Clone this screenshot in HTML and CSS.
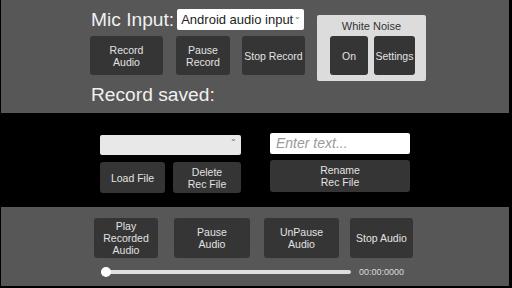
FILE: index.html
```html
<html>
    <head>
        <title>
            Audio Recorder
        </title>
        <link rel="stylesheet" href="styles.css">
    </head>
    <body>
        <div class="panel top">
            <div class="rec-col">
                <div class="mic-row">
                    <span class="big-label">Mic Input:</span>
                    <div class="mic-select">Android audio input <span class="chev">&#8964;</span></div>
                </div>
                <div class="btn-row">
                    <div class="btn w-record">Record<br>Audio</div>
                    <div class="btn w-pause">Pause<br>Record</div>
                    <div class="btn w-stop">Stop Record</div>
                </div>
                <div class="big-label saved">Record saved:</div>
            </div>
            <div class="noise-box">
                <div class="noise-title">White Noise</div>
                <div class="noise-btns">
                    <div class="btn w-on">On</div>
                    <div class="btn w-settings">Settings</div>
                </div>
            </div>
        </div>
        <div class="files">
            <div class="file-col">
                <div class="file-select"><span class="chev small">&#8964;</span></div>
                <div class="file-btns">
                    <div class="btn w-load">Load File</div>
                    <div class="btn w-delete">Delete<br>Rec File</div>
                </div>
            </div>
            <div class="rename-col">
                <div class="text-input">Enter text...</div>
                <div class="btn w-rename">Rename<br>Rec File</div>
            </div>
        </div>
        <div class="panel bottom">
            <div class="play-row">
                <div class="btn w-play">Play<br>Recorded<br>Audio</div>
                <div class="btn w-paudio">Pause<br>Audio</div>
                <div class="btn w-unpause">UnPause<br>Audio</div>
                <div class="btn w-saudio">Stop Audio</div>
            </div>
            <div class="slider-row">
                <div class="track"><div class="knob"></div></div>
                <span class="time">00:00:0000</span>
            </div>
        </div>
    </body>
</html>
```

FILE: styles.css
```css
body {
    margin: 0;
    background-color: #000;
    font-family: "Liberation Sans", Arial, sans-serif;
    width: 512px;
    height: 288px;
    overflow: hidden;
}
.panel {
    background-color: #575757;
    margin-left: 1px;
    width: 508px;
    box-sizing: border-box;
}
.top {
    height: 113px;
    display: flex;
    padding-left: 89px;
    padding-top: 9px;
}
.rec-col {
    width: 215px;
}
.mic-row {
    display: flex;
    align-items: center;
    height: 21px;
}
.big-label {
    color: #f0f0f0;
    font-size: 19.2px;
    margin-left: 1px;
    white-space: nowrap;
}
.mic-select {
    margin-left: 3px;
    width: 127px;
    height: 21px;
    box-sizing: border-box;
    background-color: #fff;
    border-radius: 2px;
    color: #222;
    font-size: 13px;
    line-height: 21px;
    padding-left: 4px;
    position: relative;
    flex-shrink: 0;
}
.chev {
    position: absolute;
    right: 3px;
    top: -3px;
    font-size: 8px;
    color: #666;
}
.chev.small {
    right: 4px;
    top: -1px;
}
.btn-row {
    display: flex;
    margin-top: 6px;
}
.btn {
    background-color: #353535;
    border-radius: 3px;
    color: #e2e2e2;
    font-size: 10.5px;
    line-height: 12px;
    text-align: center;
    display: flex;
    align-items: center;
    justify-content: center;
    height: 39px;
}
.w-record { width: 73px; }
.w-pause { width: 54px; margin-left: 13px; }
.w-stop { width: 63px; margin-left: 12px; }
.saved {
    margin-top: 9px;
}
.noise-box {
    margin-left: 12px;
    margin-top: 6px;
    width: 109px;
    height: 66px;
    background-color: #dcdcdc;
    border-radius: 2px;
    box-sizing: border-box;
    padding-left: 13px;
}
.noise-title {
    color: #333;
    font-size: 11px;
    text-align: center;
    margin-left: -13px;
    margin-top: 5px;
    height: 16px;
}
.noise-btns {
    display: flex;
}
.w-on { width: 38px; }
.w-settings { width: 41px; margin-left: 6px; }
.files {
    height: 94px;
    display: flex;
    padding-left: 100px;
}
.file-col {
    margin-top: 22px;
}
.file-select {
    width: 141px;
    height: 20px;
    background-color: #e8e8e8;
    border-radius: 2px;
    position: relative;
}
.file-btns {
    display: flex;
    margin-top: 7px;
}
.file-btns .btn {
    height: 31px;
}
.w-load { width: 65px; }
.w-delete { width: 68px; margin-left: 8px; }
.rename-col {
    margin-left: 29px;
    margin-top: 20px;
}
.text-input {
    width: 140px;
    height: 21px;
    box-sizing: border-box;
    background-color: #fff;
    border-radius: 2px;
    color: #9a9a9a;
    font-style: italic;
    font-size: 14px;
    line-height: 21px;
    padding-left: 6px;
}
.w-rename {
    width: 140px;
    height: 32px !important;
    margin-top: 6px;
}
.bottom {
    height: 79px;
    padding-top: 11px;
}
.play-row {
    display: flex;
    padding-left: 93px;
}
.play-row .btn {
    height: 40px;
}
.w-play { width: 64px; }
.w-paudio { width: 76px; margin-left: 16px; }
.w-unpause { width: 75px; margin-left: 14px; }
.w-saudio { width: 63px; margin-left: 11px; }
.slider-row {
    display: flex;
    align-items: center;
    padding-left: 100px;
    margin-top: 9px;
}
.track {
    width: 250px;
    height: 4px;
    background-color: #dedede;
    border-radius: 2px;
    position: relative;
}
.knob {
    position: absolute;
    left: 0;
    top: -3px;
    width: 10px;
    height: 10px;
    border-radius: 50%;
    background-color: #fff;
}
.time {
    color: #dcdcdc;
    font-size: 9px;
    margin-left: 8px;
}
```
